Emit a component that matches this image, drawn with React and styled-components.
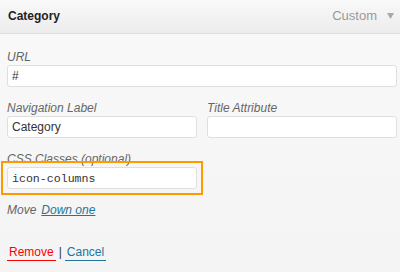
import React from "react";
import styled, { createGlobalStyle } from "styled-components";

const Global = createGlobalStyle`
  html, body { margin: 0; padding: 0; }
  body {
    width: 400px;
    height: 272px;
    overflow: hidden;
    font-family: "Liberation Sans", Arial, sans-serif;
    font-size: 12px;
    color: #333;
    background: #f5f5f5;
  }
  * { box-sizing: border-box; }
`;

const Panel = styled.div`
  width: 400px;
  height: 272px;
  background: linear-gradient(to bottom, #f9f9f9, #f4f4f4);
  display: flex;
  flex-direction: column;
`;

const Header = styled.div`
  height: 34px;
  padding: 0 6px 2px 8px;
  display: flex;
  align-items: center;
  justify-content: space-between;
  background: linear-gradient(to bottom, #f9f9f9, #ececec);
  border-bottom: 1px solid #dfdfdf;
`;

const Title = styled.span`
  font-weight: bold;
  font-size: 12px;
  line-height: 14px;
  color: #222;
`;

const Controls = styled.div`
  display: flex;
  align-items: center;
  gap: 10px;
`;

const ItemType = styled.span`
  font-size: 13px;
  line-height: 14px;
  color: #999;
`;

const Arrow = styled.svg`
  display: block;
  width: 7px;
  height: 6px;
  margin-top: 1px;
`;

const Body = styled.div`
  padding: 16px 3px 0 7px;
  display: flex;
  flex-direction: column;
`;

const Row = styled.div`
  display: grid;
  grid-template-columns: 190px 190px;
  column-gap: 10px;
  margin-bottom: 14px;
`;

const Field = styled.div`
  display: flex;
  flex-direction: column;
  margin-bottom: ${(p) => (p.$inRow ? "0" : "14px")};
  width: ${(p) => p.$width || "auto"};
`;

const Label = styled.label`
  font-style: italic;
  font-size: 12px;
  line-height: 14px;
  color: #666;
  margin-bottom: 1px;
`;

const InputWrap = styled.div`
  position: relative;
`;

const Highlight = styled.div`
  position: absolute;
  top: -6px;
  left: -6px;
  right: -6px;
  bottom: -6px;
  border: 2px solid #ff9900;
  pointer-events: none;
`;

const Input = styled.input`
  display: block;
  width: 100%;
  height: 22px;
  margin: 0;
  padding: 0 4px;
  border: 1px solid #dfdfdf;
  border-radius: 3px;
  background: #fff;
  color: #333;
  font-family: ${(p) =>
    p.$mono
      ? '"Liberation Mono", "DejaVu Sans Mono", monospace'
      : '"Liberation Sans", Arial, sans-serif'};
  font-size: ${(p) => (p.$mono ? "11.6px" : "12px")};
  outline: none;
`;

const MoveRow = styled.div`
  display: flex;
  gap: 5px;
  font-size: 12px;
  line-height: 14px;
  margin-bottom: 28px;
`;

const MoveLabel = styled.span`
  font-style: italic;
  color: #666;
`;

const MoveLink = styled.a`
  font-style: italic;
  color: #21759b;
  text-decoration: underline;
`;

const Actions = styled.div`
  font-size: 12px;
  line-height: 14px;
  color: #333;
`;

const ActionLink = styled.a`
  color: ${(p) => p.$color};
  text-decoration: none;
  padding: 0 2px 1px;
  border-bottom: 1px solid ${(p) => p.$color};
`;

const Sep = styled.span`
  margin: 0 3px;
`;

export default function App() {
  return (
    <>
      <Global />
      <Panel>
        <Header>
          <Title>Category</Title>
          <Controls>
            <ItemType>Custom</ItemType>
            <Arrow viewBox="0 0 7 6">
              <polygon points="0,0 7,0 3.5,6" fill="#a8a8a8" />
            </Arrow>
          </Controls>
        </Header>
        <Body>
          <Field>
            <Label>URL</Label>
            <Input defaultValue="#" />
          </Field>
          <Row>
            <Field $inRow>
              <Label>Navigation Label</Label>
              <Input defaultValue="Category" />
            </Field>
            <Field $inRow>
              <Label>Title Attribute</Label>
              <Input defaultValue="" />
            </Field>
          </Row>
          <Field $width="190px">
            <Label>CSS Classes (optional)</Label>
            <InputWrap>
              <Input $mono defaultValue="icon-columns" />
              <Highlight />
            </InputWrap>
          </Field>
          <MoveRow>
            <MoveLabel>Move</MoveLabel>
            <MoveLink href="#">Down one</MoveLink>
          </MoveRow>
          <Actions>
            <ActionLink href="#" $color="#ff0000">Remove</ActionLink>
            <Sep>|</Sep>
            <ActionLink href="#" $color="#21759b">Cancel</ActionLink>
          </Actions>
        </Body>
      </Panel>
    </>
  );
}
